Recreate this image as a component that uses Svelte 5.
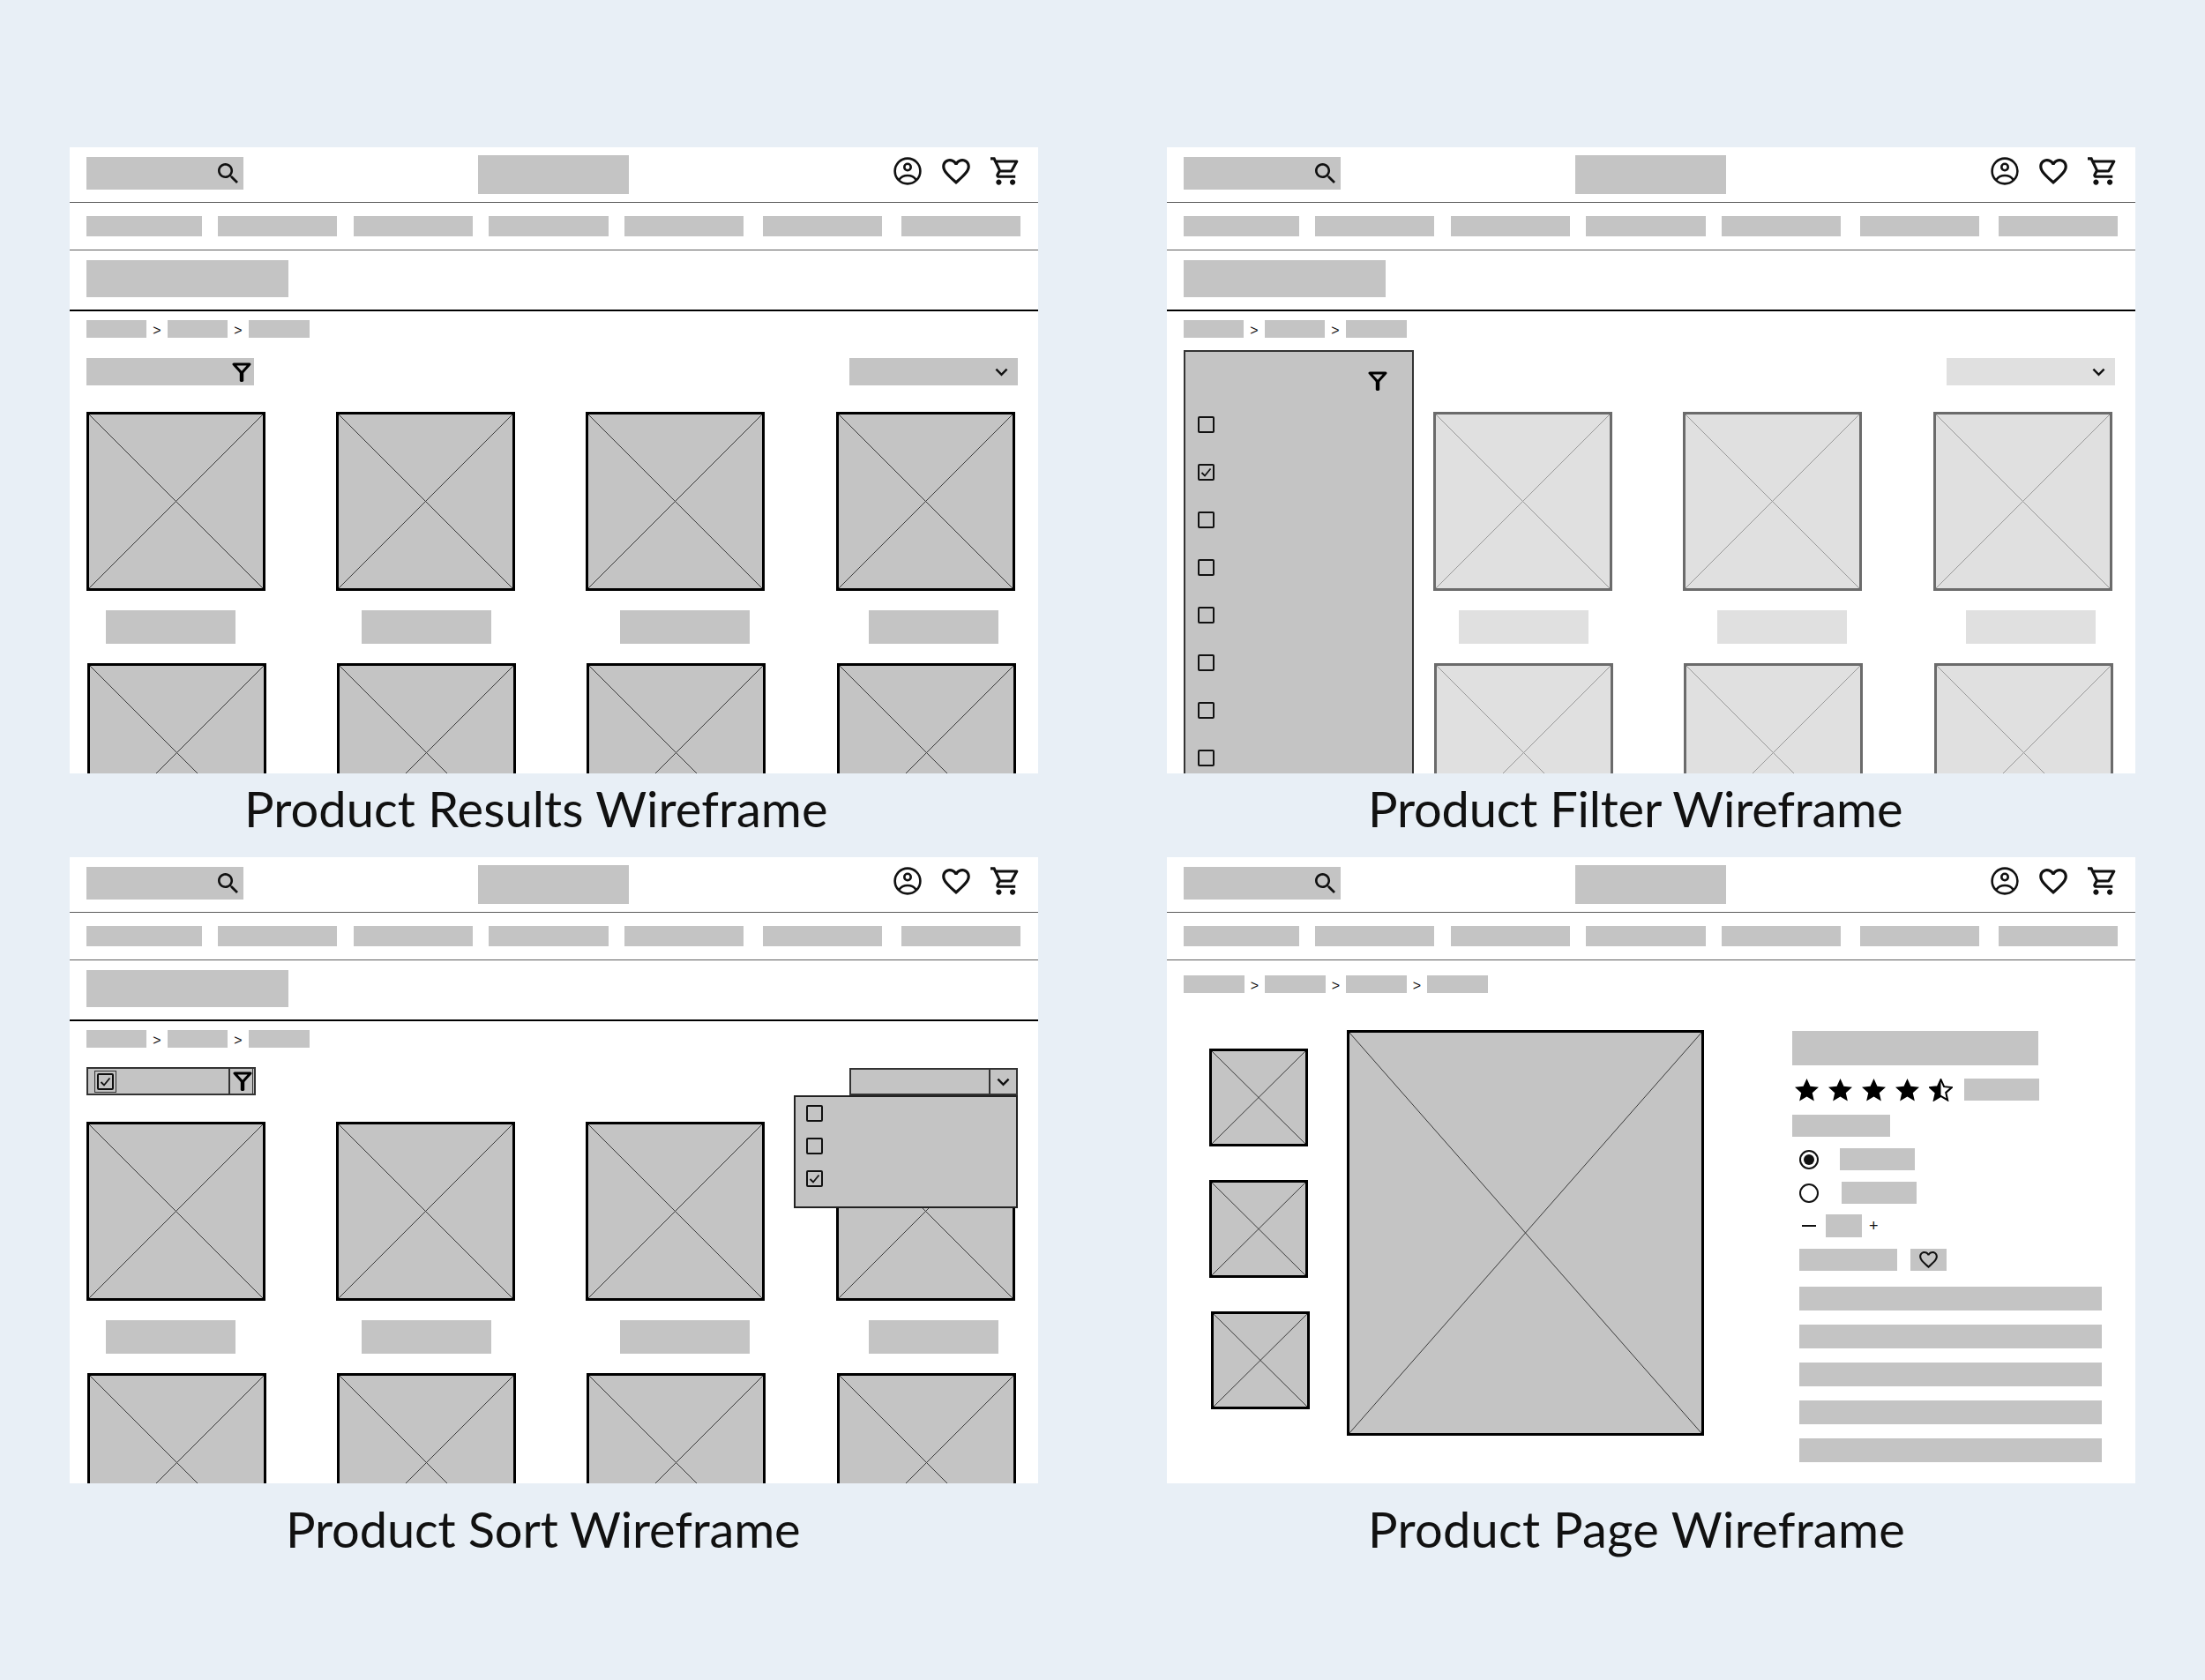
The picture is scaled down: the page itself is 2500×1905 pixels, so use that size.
<script>
	const nav = [
		[131, 0],
		[135, 18],
		[135, 19],
		[136, 18],
		[135, 18],
		[135, 22],
		[135, 22]
	];
	const capOffsets = [22, 29, 39, 37];
	const crumbs3 = [68, 68, 69];
	const crumbs4 = [69, 69, 69, 69];
	const starPts = '12,1.5 15.2,8.6 23,9.4 17.1,14.6 18.8,22.2 12,18.2 5.2,22.2 6.9,14.6 1,9.4 8.8,8.6';
</script>

{#snippet placeholder(cls = '')}
	<div class="ph {cls}">
		<svg viewBox="0 0 100 100" preserveAspectRatio="none">
			<line x1="0" y1="0" x2="100" y2="100" vector-effect="non-scaling-stroke" />
			<line x1="100" y1="0" x2="0" y2="100" vector-effect="non-scaling-stroke" />
		</svg>
	</div>
{/snippet}

{#snippet funnel()}
	<svg class="funnel" viewBox="0 0 22 22">
		<path d="M2 2 H20 L11 12 Z" fill="none" stroke="#000" stroke-width="3" stroke-linejoin="round" />
		<rect x="8.8" y="10" width="4.4" height="12" rx="1.4" fill="#000" />
	</svg>
{/snippet}

{#snippet chevron()}
	<svg class="chev" viewBox="0 0 16 10">
		<polyline points="1.5,1.5 8,8 14.5,1.5" fill="none" stroke="#111" stroke-width="2.6" />
	</svg>
{/snippet}

{#snippet checkbox(checked = false)}
	<span class="check">
		{#if checked}
			<svg viewBox="0 0 15 15">
				<polyline points="2.5,8 6,11.5 12.5,3.5" fill="none" stroke="#111" stroke-width="1.8" />
			</svg>
		{/if}
	</span>
{/snippet}

{#snippet heart(cls = '')}
	<svg class="heart {cls}" viewBox="2 3 20 18.35">
		<path
			d="M16.5 3c-1.74 0-3.41.81-4.5 2.09C10.91 3.81 9.24 3 7.5 3 4.42 3 2 5.42 2 8.5c0 3.78 3.4 6.86 8.55 11.54L12 21.35l1.45-1.32C18.6 15.36 22 12.28 22 8.5 22 5.42 19.58 3 16.5 3zm-4.4 15.55l-.1.1-.1-.1C7.14 14.24 4 11.39 4 8.5 4 6.5 5.5 5 7.5 5c1.54 0 3.04.99 3.57 2.36h1.87C13.46 5.99 14.96 5 16.5 5c2 0 3.5 1.5 3.5 3.5 0 2.89-3.14 5.74-7.9 10.05z"
		/>
	</svg>
{/snippet}

{#snippet header()}
	<div class="top">
		<div class="bar search">
			<svg viewBox="3 3 17.5 17.5">
				<path
					d="M15.5 14h-.79l-.28-.27C15.41 12.59 16 11.11 16 9.5 16 5.91 13.09 3 9.5 3S3 5.91 3 9.5 5.91 16 9.5 16c1.61 0 3.09-.59 4.23-1.57l.27.28v.79l5 4.99L20.49 19l-4.99-5zm-6 0C7.01 14 5 11.99 5 9.5S7.01 5 9.5 5 14 7.01 14 9.5 11.99 14 9.5 14z"
				/>
			</svg>
		</div>
		<div class="bar logo"></div>
		<div class="icons">
			<svg class="user" viewBox="0 0 32 32" fill="none" stroke="#111" stroke-width="2.6">
				<circle cx="16" cy="16" r="14.4" />
				<circle cx="16" cy="11.5" r="3.7" />
				<path d="M6.5 25.8 C9 22 12.5 21 16 21 S23 22 25.5 25.8" />
			</svg>
			{@render heart()}
			<svg class="cart" viewBox="1 2 20.4 20">
				<path
					d="M15.55 13c.75 0 1.41-.41 1.75-1.03l3.58-6.49c.37-.66-.11-1.48-.87-1.48H5.21l-.94-2H1v2h2l3.6 7.59-1.35 2.44C4.52 15.37 5.48 17 7 17h12v-2H7l1.1-2h7.45zM6.16 6h12.15l-2.76 5H8.53L6.16 6zM7 18c-1.1 0-1.99.9-1.99 2S5.9 22 7 22s2-.9 2-2-.9-2-2-2zm10 0c-1.1 0-1.99.9-1.99 2s.89 2 1.99 2 2-.9 2-2-.9-2-2-2z"
				/>
			</svg>
		</div>
	</div>
	<div class="nav">
		{#each nav as [w, gap]}
			<div class="bar" style="width:{w}px;margin-left:{gap}px"></div>
		{/each}
	</div>
{/snippet}

{#snippet breadcrumbs(items)}
	<div class="crumbs">
		{#each items as w, i}
			{#if i > 0}<span class="sep">&gt;</span>{/if}
			<div class="bar" style="width:{w}px"></div>
		{/each}
	</div>
{/snippet}

{#snippet products(faded = false, skipFirst = false)}
	<div class="grid" class:faded>
		{#each [0, 1] as row}
			{#each capOffsets as off, i}
				<div class="product" class:ghost={skipFirst && i === 0}>
					{@render placeholder()}
					{#if row === 0}
						<div class="bar cap" style="margin-left:{off}px"></div>
					{/if}
				</div>
			{/each}
		{/each}
	</div>
{/snippet}

{#snippet listing(mode)}
	{@render header()}
	<div class="heading"><div class="bar title"></div></div>
	{@render breadcrumbs(crumbs3)}
	<div class="tools">
		{#if mode === 'results'}
			<div class="bar filterbar">{@render funnel()}</div>
		{:else if mode === 'filter'}
			<div class="filterbar blank"></div>
		{:else}
			<div class="filterbar outlined">
				<span class="boxed">{@render checkbox(true)}</span>
				<span class="fcell">{@render funnel()}</span>
			</div>
		{/if}

		{#if mode === 'sort'}
			<div class="sortbar outlined">
				<span class="scell">{@render chevron()}</span>
				<div class="dropdown">
					{@render checkbox()}
					{@render checkbox()}
					{@render checkbox(true)}
				</div>
			</div>
		{:else}
			<div class="sortbar" class:light={mode === 'filter'}>{@render chevron()}</div>
		{/if}
	</div>
	{@render products(mode === 'filter', mode === 'filter')}
	{#if mode === 'filter'}
		<aside class="filterpanel">
			<div class="fhead">{@render funnel()}</div>
			{#each [false, true, false, false, false, false, false, false] as c}
				{@render checkbox(c)}
			{/each}
		</aside>
	{/if}
{/snippet}

<div class="page">
	<div class="cell">
		<section class="panel">{@render listing('results')}</section>
		<p class="caption c-a">Product Results Wireframe</p>
	</div>
	<div class="cell">
		<section class="panel">{@render listing('filter')}</section>
		<p class="caption c-b">Product Filter Wireframe</p>
	</div>
	<div class="cell">
		<section class="panel">{@render listing('sort')}</section>
		<p class="caption low c-c">Product Sort Wireframe</p>
	</div>
	<div class="cell">
		<section class="panel">
			{@render header()}
			<div class="pdp-crumbs">{@render breadcrumbs(crumbs4)}</div>
			<div class="pdp">
				<div class="thumbs">
					{@render placeholder('thumb')}
					{@render placeholder('thumb')}
					{@render placeholder('thumb shifted')}
				</div>
				{@render placeholder('main')}
				<div class="details">
					<div class="bar d-title"></div>
					<div class="rating">
						{#each [0, 1, 2, 3] as s}
							<svg class="star" viewBox="1 1.5 22 21"><polygon points={starPts} fill="#000" /></svg>
						{/each}
						<svg class="star" viewBox="0 0.5 24 23">
							<polygon points={starPts} fill="none" stroke="#000" stroke-width="1.8" />
							<polygon points="12,1.5 12,18.2 5.2,22.2 6.9,14.6 1,9.4 8.8,8.6" fill="#000" />
						</svg>
						<div class="bar d-count"></div>
					</div>
					<div class="bar d-price"></div>
					<div class="opt">
						<span class="radio on"></span>
						<div class="bar o1"></div>
					</div>
					<div class="opt second">
						<span class="radio"></span>
						<div class="bar o2"></div>
					</div>
					<div class="qty">
						<span class="minus"></span>
						<div class="bar q"></div>
						<span class="plus">+</span>
					</div>
					<div class="actions">
						<div class="bar add"></div>
						<div class="bar wish">{@render heart('small')}</div>
					</div>
					<div class="lines">
						{#each [0, 1, 2, 3, 4] as l}
							<div class="bar"></div>
						{/each}
					</div>
				</div>
			</div>
		</section>
		<p class="caption low c-d">Product Page Wireframe</p>
	</div>
</div>

<style>
	:global(body) {
		margin: 0;
		background: #e8eff6;
	}

	.page {
		width: 2500px;
		height: 1905px;
		box-sizing: border-box;
		padding: 167px 0 0 79px;
		display: grid;
		grid-template-columns: 1098px 1098px;
		grid-auto-rows: 805px;
		column-gap: 146px;
		font-family: Lato, 'Liberation Sans', sans-serif;
	}

	.panel {
		position: relative;
		height: 710px;
		background: #fff;
		overflow: hidden;
	}

	.caption {
		margin: 0;
		font-size: 56px;
		line-height: 80px;
		color: #111;
		white-space: nowrap;
	}
	.caption.low {
		line-height: 104px;
	}
	.c-a {
		margin-left: 198px;
		letter-spacing: 0.06px;
	}
	.c-b {
		margin-left: 228px;
		letter-spacing: -0.2px;
	}
	.c-c {
		margin-left: 245px;
		letter-spacing: -0.14px;
	}
	.c-d {
		margin-left: 228px;
		letter-spacing: 0.28px;
	}

	.bar {
		background: #c4c4c4;
	}

	/* header rows */
	.top {
		height: 62px;
		padding: 0 20px 0 19px;
		display: grid;
		grid-template-columns: 1fr 171px 1fr;
		align-items: center;
		border-bottom: 1px solid #5c5c5c;
	}
	.search {
		width: 178px;
		height: 37px;
		margin-bottom: 3px;
		display: flex;
		align-items: center;
		justify-content: flex-end;
		padding-right: 6px;
		box-sizing: border-box;
	}
	.search svg {
		width: 23px;
		height: 23px;
		fill: #111;
	}
	.logo {
		height: 44px;
	}
	.icons {
		display: flex;
		justify-content: flex-end;
		align-items: center;
		gap: 23px;
		margin: 0 2px 8px 0;
	}
	.user {
		width: 32px;
		height: 32px;
	}
	.heart {
		width: 32px;
		height: 29px;
		fill: #111;
	}
	.heart.small {
		width: 21px;
		height: 19px;
	}
	.cart {
		width: 32px;
		height: 32px;
		fill: #111;
	}

	.nav {
		height: 54px;
		box-sizing: border-box;
		padding: 15px 0 0 19px;
		display: flex;
		border-bottom: 1px solid #5c5c5c;
	}
	.nav .bar {
		height: 23px;
		flex: none;
	}

	.heading {
		height: 69px;
		box-sizing: border-box;
		padding: 11px 0 0 19px;
		border-bottom: 2px solid #000;
	}
	.title {
		width: 229px;
		height: 42px;
	}

	.crumbs {
		display: flex;
		padding: 10px 0 0 19px;
		height: 20px;
	}
	.crumbs .bar {
		height: 20px;
		flex: none;
	}
	.sep {
		width: 24px;
		text-align: center;
		font: 16px/24px 'Liberation Sans', sans-serif;
		color: #111;
	}
	.pdp-crumbs .sep {
		width: 23px;
	}

	/* toolbar */
	.tools {
		display: flex;
		justify-content: space-between;
		padding: 23px 23px 0 19px;
		height: 31px;
	}
	.filterbar {
		width: 190px;
		height: 31px;
		display: flex;
		align-items: center;
		justify-content: flex-end;
		padding-right: 3px;
		box-sizing: border-box;
	}
	.filterbar.blank {
		visibility: hidden;
	}
	.funnel {
		width: 22px;
		height: 22px;
		flex: none;
	}
	.sortbar {
		position: relative;
		width: 191px;
		height: 31px;
		box-sizing: border-box;
		background: #c4c4c4;
		display: flex;
		align-items: center;
		justify-content: flex-end;
		padding-right: 11px;
	}
	.sortbar.light {
		background: #e0e0e0;
	}
	.chev {
		width: 15px;
		height: 10px;
	}
	.outlined {
		background: #c4c4c4;
		border: 2px solid #333;
	}
	.filterbar.outlined {
		width: 192px;
		height: 32px;
		margin-top: -1px;
		padding-right: 1px;
		align-items: stretch;
		justify-content: space-between;
	}
	.boxed {
		align-self: flex-start;
		margin: 2px 0 0 7px;
		padding: 2px;
		height: 19px;
		border: 1px solid #333;
		display: flex;
	}
	.fcell {
		display: flex;
		align-items: center;
		padding-left: 3px;
		border-left: 2px solid #333;
		border-right: 1px solid #333;
	}
	.sortbar.outlined {
		padding-right: 0;
		align-items: stretch;
	}
	.scell {
		width: 29px;
		border-left: 2px solid #333;
		display: flex;
		align-items: center;
		justify-content: center;
	}
	.dropdown {
		position: absolute;
		z-index: 2;
		top: 29px;
		right: -2px;
		width: 254px;
		height: 128px;
		box-sizing: border-box;
		background: #c4c4c4;
		border: 2px solid #222;
		padding: 9px 0 0 12px;
		display: flex;
		flex-direction: column;
		align-items: flex-start;
		gap: 18px;
	}

	.check {
		display: block;
		width: 19px;
		height: 19px;
		box-sizing: border-box;
		border: 2.5px solid #111;
		border-radius: 2px;
		flex: none;
	}
	.check svg {
		display: block;
		width: 100%;
		height: 100%;
	}

	/* product grid */
	.grid {
		display: grid;
		grid-template-columns: 283px 283px 284px 203px;
		row-gap: 22px;
		padding: 30px 0 0 19px;
	}
	.product {
		display: flex;
		flex-direction: column;
		gap: 22px;
	}
	.product:nth-child(n + 5) .ph {
		margin-left: 1px;
	}
	.product.ghost {
		visibility: hidden;
	}
	.cap {
		width: 147px;
		height: 38px;
	}
	.ph {
		box-sizing: border-box;
		width: 203px;
		height: 203px;
		flex: none;
		background: #c4c4c4;
		border: 3px solid #000;
	}
	.ph svg {
		display: block;
		width: 100%;
		height: 100%;
	}
	.ph line {
		stroke: #3a3a3a;
		stroke-width: 1;
	}
	.faded .ph {
		background: #e0e0e0;
		border-color: #6b6b6b;
	}
	.faded .ph line {
		stroke: #999;
	}
	.faded .cap {
		background: #e0e0e0;
	}

	.filterpanel {
		position: absolute;
		left: 19px;
		top: 230px;
		width: 261px;
		height: 500px;
		box-sizing: border-box;
		background: #c4c4c4;
		border: 2px solid #333;
		padding: 0 0 0 14px;
		display: flex;
		flex-direction: column;
		gap: 35px;
	}
	.fhead {
		height: 39px;
		padding: 22px 28px 0 0;
		display: flex;
		justify-content: flex-end;
		margin-bottom: -23px;
	}

	/* product page */
	.pdp-crumbs {
		padding-top: 7px;
	}
	.pdp {
		display: flex;
		padding: 42px 0 0 48px;
	}
	.thumbs {
		width: 112px;
		padding-top: 21px;
		display: flex;
		flex-direction: column;
		gap: 38px;
	}
	.ph.thumb {
		width: 112px;
		height: 111px;
	}
	.ph.thumb.shifted {
		margin-left: 2px;
	}
	.ph.main {
		width: 405px;
		height: 460px;
		margin-left: 44px;
	}
	.details {
		margin-left: 100px;
		padding-top: 1px;
		display: flex;
		flex-direction: column;
		align-items: flex-start;
	}
	.d-title {
		width: 279px;
		height: 39px;
	}
	.rating {
		display: flex;
		align-items: center;
		margin: 15px 0 0 3px;
		height: 25px;
	}
	.star {
		width: 27px;
		height: 26px;
		margin-right: 11px;
		flex: none;
	}
	.star:nth-of-type(5) {
		margin-right: 0;
	}
	.d-count {
		width: 85px;
		height: 25px;
		margin-left: 13px;
	}
	.d-price {
		width: 111px;
		height: 25px;
		margin-top: 16px;
	}
	.opt {
		display: flex;
		align-items: center;
		margin: 13px 0 0 8px;
		height: 25px;
	}
	.opt.second {
		margin-top: 13px;
	}
	.radio {
		position: relative;
		width: 22px;
		height: 22px;
		box-sizing: border-box;
		border: 2.5px solid #111;
		border-radius: 50%;
		flex: none;
	}
	.radio.on::after {
		content: '';
		position: absolute;
		inset: 3px;
		border-radius: 50%;
		background: #111;
	}
	.o1 {
		width: 85px;
		height: 25px;
		margin-left: 24px;
	}
	.o2 {
		width: 85px;
		height: 25px;
		margin-left: 26px;
	}
	.qty {
		display: flex;
		align-items: center;
		margin: 12px 0 0 11px;
		height: 26px;
	}
	.minus {
		width: 16px;
		height: 2px;
		background: #111;
	}
	.q {
		width: 41px;
		height: 26px;
		margin-left: 11px;
	}
	.plus {
		font: 18px/26px 'Liberation Sans', sans-serif;
		color: #111;
		margin-left: 8px;
	}
	.actions {
		display: flex;
		gap: 15px;
		margin: 13px 0 0 8px;
	}
	.add {
		width: 111px;
		height: 25px;
	}
	.wish {
		width: 41px;
		height: 25px;
		display: flex;
		align-items: center;
		justify-content: center;
	}
	.lines {
		width: 343px;
		margin: 18px 0 0 8px;
		display: flex;
		flex-direction: column;
		gap: 16px;
	}
	.lines .bar {
		height: 27px;
	}
</style>
